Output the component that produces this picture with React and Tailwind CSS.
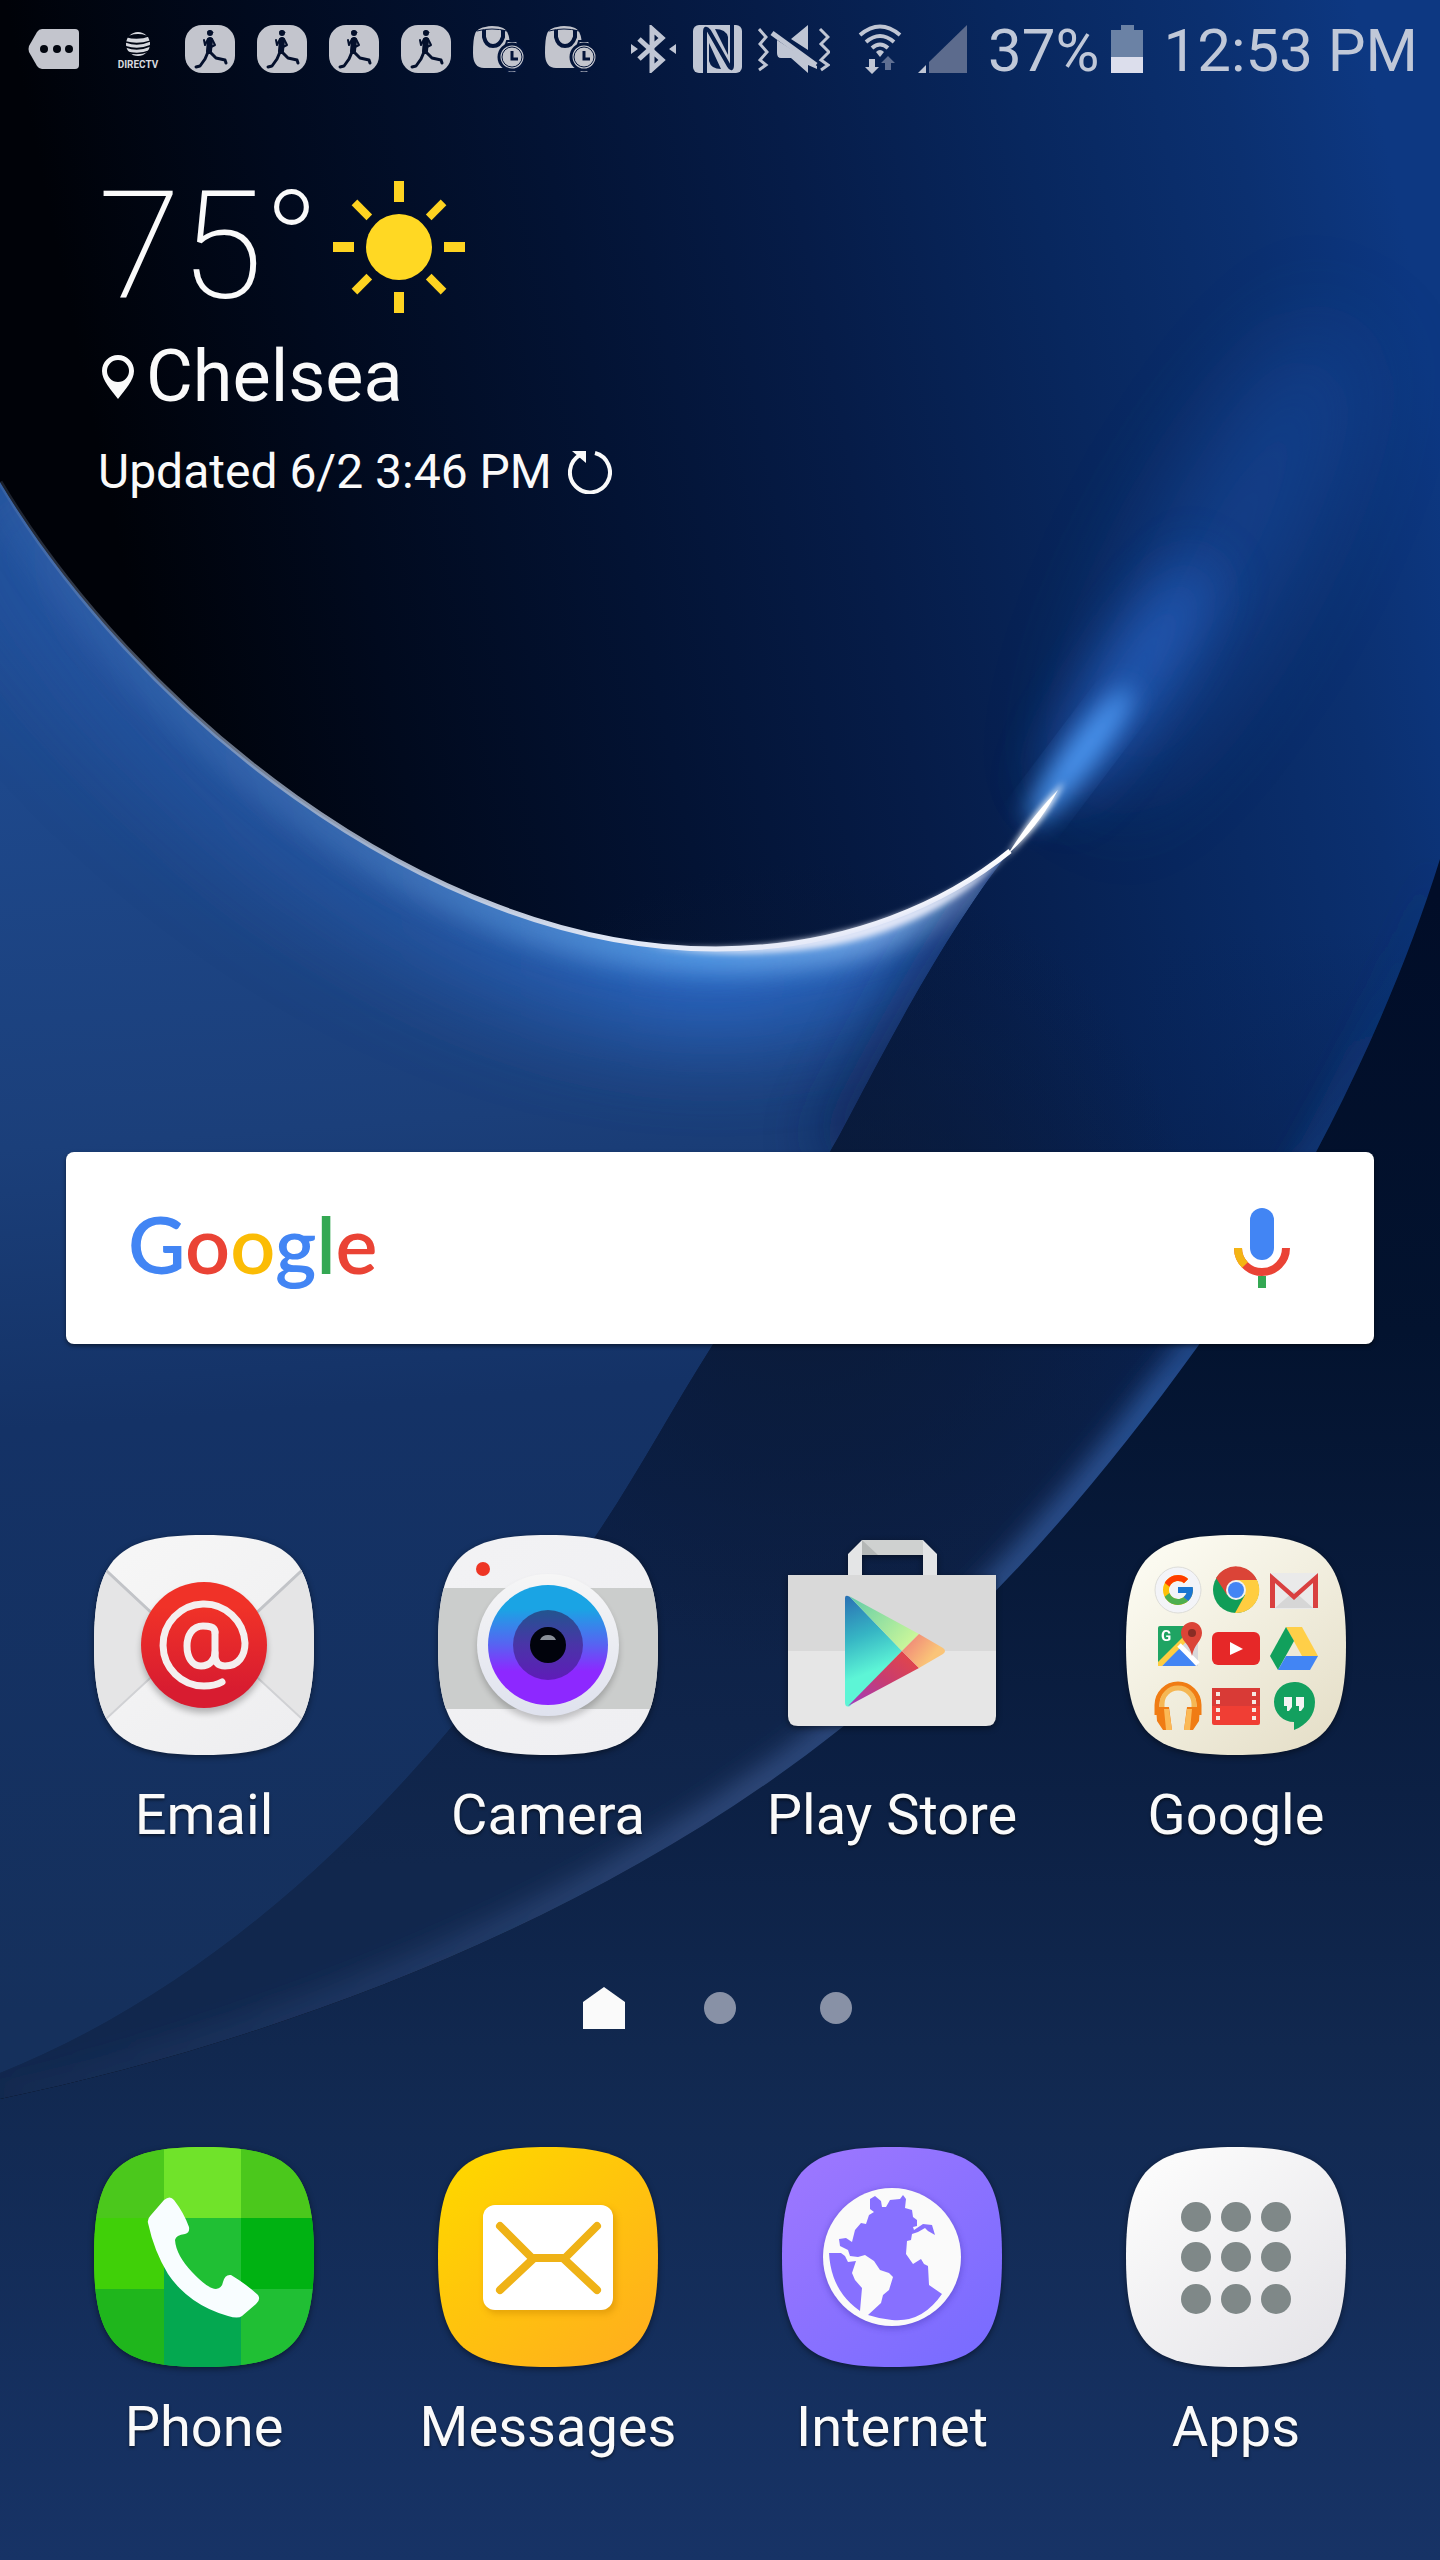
import { useId, useState } from 'react';
import { FcGoogle } from 'react-icons/fc';

const SQUIRCLE =
  'M110 0C197 0 220 23 220 110S197 220 110 220S0 197 0 110S23 0 110 0Z';

function Wallpaper() {
  const horizon = 'M0 482C130 700 420 949 716 949C850 949 950 900 1010 851';
  const inner =
    'C930 950 850 1120 831 1150C800 1210 760 1270 712 1346C670 1412 640 1470 597 1534C470 1720 280 1960 0 2073';
  return (
    <svg
      className="absolute inset-0 h-full w-full"
      viewBox="0 0 1440 2560"
      preserveAspectRatio="xMidYMid slice"
      aria-hidden="true"
    >
      <defs>
        <linearGradient id="wp-base" x1="0" y1="0" x2="0" y2="1">
          <stop offset="0.35" stopColor="#010d28" />
          <stop offset="0.52" stopColor="#03132f" />
          <stop offset="0.7" stopColor="#0c2044" />
          <stop offset="0.8" stopColor="#11284f" />
          <stop offset="1" stopColor="#173366" />
        </linearGradient>
        <linearGradient id="wp-sky" gradientUnits="userSpaceOnUse" x1="0" y1="700" x2="1440" y2="400">
          <stop offset="0.1" stopColor="#000208" />
          <stop offset="0.26" stopColor="#010a1e" />
          <stop offset="0.44" stopColor="#031334" />
          <stop offset="0.6" stopColor="#061c48" />
          <stop offset="0.76" stopColor="#08275e" />
          <stop offset="0.9" stopColor="#0b3070" />
          <stop offset="1" stopColor="#0d3882" />
        </linearGradient>
        <linearGradient id="wp-band" x1="0" y1="0" x2="0" y2="1">
          <stop offset="0.1" stopColor="#07245a" stopOpacity="0" />
          <stop offset="0.42" stopColor="#09204c" stopOpacity="0.9" />
          <stop offset="0.6" stopColor="#0d2147" />
          <stop offset="0.82" stopColor="#11274d" />
        </linearGradient>
        <radialGradient id="wp-shade" gradientUnits="userSpaceOnUse" cx="800" cy="1260" r="400">
          <stop offset="0" stopColor="#0b1a36" stopOpacity="0.9" />
          <stop offset="0.5" stopColor="#0b1a36" stopOpacity="0.5" />
          <stop offset="1" stopColor="#0b1a36" stopOpacity="0" />
        </radialGradient>
        <linearGradient id="wp-swoosh" gradientUnits="userSpaceOnUse" x1="200" y1="600" x2="300" y2="2000">
          <stop offset="0" stopColor="#1f4c93" />
          <stop offset="0.38" stopColor="#1b3f7a" />
          <stop offset="0.58" stopColor="#143266" />
          <stop offset="1" stopColor="#15305c" />
        </linearGradient>
        <linearGradient id="wp-rim" gradientUnits="userSpaceOnUse" x1="0" y1="0" x2="1010" y2="0">
          <stop offset="0" stopColor="#7d92b4" stopOpacity="0.2" />
          <stop offset="0.3" stopColor="#a9b6cc" stopOpacity="0.8" />
          <stop offset="0.6" stopColor="#dfe6f5" />
          <stop offset="1" stopColor="#ffffff" />
        </linearGradient>
        <linearGradient id="wp-glow" gradientUnits="userSpaceOnUse" x1="0" y1="0" x2="1010" y2="0">
          <stop offset="0" stopColor="#4474b8" stopOpacity="0.3" />
          <stop offset="0.35" stopColor="#5d92d2" stopOpacity="0.5" />
          <stop offset="0.7" stopColor="#64aef2" />
          <stop offset="1" stopColor="#a8c8f5" />
        </linearGradient>
        <linearGradient id="wp-halo" gradientUnits="userSpaceOnUse" x1="0" y1="0" x2="1010" y2="0">
          <stop offset="0" stopColor="#2a5fb5" stopOpacity="0.4" />
          <stop offset="0.4" stopColor="#2c64b8" stopOpacity="0.7" />
          <stop offset="0.7" stopColor="#2f74da" />
          <stop offset="1" stopColor="#2f74da" stopOpacity="0.6" />
        </linearGradient>
        <linearGradient id="wp-edge" gradientUnits="userSpaceOnUse" x1="0" y1="2099" x2="1440" y2="859">
          <stop offset="0" stopColor="#3a5a94" stopOpacity="0.05" />
          <stop offset="0.4" stopColor="#4a68a4" stopOpacity="0.5" />
          <stop offset="0.7" stopColor="#3466b4" stopOpacity="0.7" />
          <stop offset="1" stopColor="#0f3a80" stopOpacity="0" />
        </linearGradient>
        <filter id="blur-3" x="-50%" y="-50%" width="200%" height="200%"><feGaussianBlur stdDeviation="3" /></filter>
        <filter id="blur-12" x="-50%" y="-50%" width="200%" height="200%"><feGaussianBlur stdDeviation="12" /></filter>
        <filter id="blur-28" x="-100%" y="-50%" width="300%" height="200%"><feGaussianBlur stdDeviation="28" /></filter>
        <filter id="blur-50" x="-100%" y="-50%" width="300%" height="200%"><feGaussianBlur stdDeviation="45" /></filter>
        <clipPath id="clip-outer">
          <path d="M0 0H1440V859C1390 1020 1300 1200 1198 1346C1080 1510 960 1640 840 1729C600 1920 280 2040 0 2099Z" />
        </clipPath>
        <clipPath id="clip-swoosh"><path d={`${horizon}${inner}Z`} /></clipPath>
      </defs>

      <rect width="1440" height="2560" fill="url(#wp-base)" />
      <g clipPath="url(#clip-outer)">
        <rect width="1440" height="2200" fill="url(#wp-sky)" />
        <rect y="800" width="1440" height="1300" fill="url(#wp-band)" />
        <rect x="400" y="860" width="800" height="800" fill="url(#wp-shade)" />
        <path
          d="M1440 859C1390 1020 1300 1200 1198 1346C1080 1510 960 1640 840 1729C600 1920 280 2040 0 2099"
          fill="none" stroke="url(#wp-edge)" strokeWidth="36" filter="url(#blur-12)"
        />
        {/* flare beyond the horizon */}
        <ellipse cx="1220" cy="560" rx="70" ry="260" transform="rotate(28 1220 560)" fill="#1c4fa6" opacity="0.5" filter="url(#blur-50)" />
        <ellipse cx="1130" cy="680" rx="28" ry="140" transform="rotate(33 1130 680)" fill="#2a68cc" opacity="0.8" filter="url(#blur-28)" />
        <ellipse cx="1080" cy="756" rx="16" ry="84" transform="rotate(37 1080 756)" fill="#4c97f2" filter="url(#blur-12)" />
      </g>

      <g clipPath="url(#clip-swoosh)">
        <path d={`${horizon}${inner}Z`} fill="url(#wp-swoosh)" />
        <path d={horizon} fill="none" stroke="url(#wp-halo)" strokeWidth="180" opacity="0.75" filter="url(#blur-50)" />
        <path d="M0 482C130 700 420 949 716 949C850 949 900 925 980 875" fill="none" stroke="url(#wp-glow)" strokeWidth="50" opacity="0.7" filter="url(#blur-12)" />
        <path d="M1020 860C940 960 860 1130 841 1160" fill="none" stroke="#0a2352" strokeWidth="64" opacity="0.7" filter="url(#blur-28)" />
      </g>
      <path d={horizon} fill="none" stroke="url(#wp-rim)" strokeWidth="5" />
      <path d="M640 945C800 962 940 912 1012 850C970 895 900 940 800 950C740 956 690 953 640 945Z" fill="#e4e8f8" filter="url(#blur-3)" />
      <path d="M1006 857C1025 825 1045 800 1064 782C1052 808 1035 830 1006 857Z" fill="#ffffff" filter="url(#blur-3)" />
      <path d="M1008 854C1025 827 1042 806 1058 790C1046 812 1032 832 1008 854Z" fill="#ffffff" />
    </svg>
  );
}

/* ---------- status bar ---------- */

function MoreTag() {
  return (
    <svg className="mr-3 h-12 w-[52px]" viewBox="0 0 52 48">
      <path d="M14 4H47Q51 4 51 8V40Q51 44 47 44H14Q11 44 9 41L1 27Q0 24 1 21L9 7Q11 4 14 4Z" fill="#c3c5cd" />
      <circle cx="16" cy="24" r="4" fill="#02060f" />
      <circle cx="29" cy="24" r="4" fill="#02060f" />
      <circle cx="41" cy="24" r="4" fill="#02060f" />
    </svg>
  );
}

function DirecTv() {
  return (
    <svg className="h-12 w-[52px]" viewBox="0 0 52 48">
      <clipPath id="globe-clip"><circle cx="26" cy="19" r="12" /></clipPath>
      <g clipPath="url(#globe-clip)" fill="none" stroke="#d6d8de">
        <path d="M17 9Q26 6 35 9" strokeWidth="3" />
        <path d="M13 14Q26 18 39 13" strokeWidth="4" />
        <path d="M13 19Q26 24 39 18" strokeWidth="3" />
        <path d="M13 24Q26 29 39 23" strokeWidth="3" />
        <path d="M15 29Q26 32 37 28" strokeWidth="2" />
      </g>
      <text x="26" y="43" textAnchor="middle" fontSize="10" fontWeight="700" fontFamily="Roboto, sans-serif" fill="#d6d8de">DIRECTV</text>
    </svg>
  );
}

function Runner() {
  return (
    <svg className="h-12 w-[52px]" viewBox="0 0 52 48">
      <rect x="1" width="50" height="48" rx="17" fill="#c3c5cd" />
      <g fill="none" stroke="#04102c" strokeLinecap="round" strokeLinejoin="round">
        <path d="M26 15L25 26" strokeWidth="6" />
        <path d="M24 14L21 20L20 15" strokeWidth="2" />
        <path d="M28 14L31 20L27 22" strokeWidth="2" />
        <path d="M24 27L21 34L16 41L12 42" strokeWidth="3" />
        <path d="M26 27L32 33L41 35L42 38" strokeWidth="3" />
      </g>
      <circle cx="26" cy="8" r="3" fill="#04102c" />
      <path d="M23 7Q26 3 30 8Z" fill="#04102c" />
    </svg>
  );
}

function BagWatch() {
  return (
    <svg className="h-12 w-[52px]" viewBox="0 0 52 48">
      <path d="M3 9Q5 2 20 1Q34 1 36 9Q39 15 38 43H12Q1 43 1 28Q1 14 3 9Z" fill="#c3c5cd" />
      <path d="M5 6Q20 2 35 6" fill="none" stroke="#04153a" strokeWidth="1" />
      <path d="M12 5V12Q14 21 21 21Q28 21 31 12V5" fill="none" stroke="#04153a" strokeWidth="4" />
      <path d="M35 16H45L48 26H32Z M34 40H46L44 48H36Z" fill="#c3c5cd" stroke="#04153a" strokeWidth="2" />
      <circle cx="40" cy="32" r="13" fill="#c3c5cd" stroke="#04153a" strokeWidth="3" />
      <circle cx="40" cy="32" r="10" fill="none" stroke="#04153a" strokeWidth="1" />
      <path d="M40 26V34H46" fill="none" stroke="#04153a" strokeWidth="3" />
    </svg>
  );
}

function Bluetooth() {
  return (
    <svg className="h-12 w-[46px]" viewBox="0 0 46 48">
      <path d="M8 14L31 35L21 44V4L31 13L8 34" fill="none" stroke="#c0c6d4" strokeWidth="5" />
      <path d="M0 19L7 24L0 29ZM45 19L38 24L45 29Z" fill="#c0c6d4" />
    </svg>
  );
}

function NfcMark() {
  return (
    <svg className="ml-4 h-12 w-[49px]" viewBox="0 0 49 48">
      <rect width="49" height="48" rx="6" fill="#c0c6d4" />
      <path d="M12 48V7Q12 1 16 6L36 41Q39 46 39 40V0" fill="none" stroke="#061d4a" strokeWidth="4" />
      <path d="M16 18L28 44Q18 44 16 36ZM35 30L22 4Q33 4 35 12Z" fill="#061d4a" />
    </svg>
  );
}

function MuteVibrate() {
  return (
    <svg className="ml-4 h-12 w-[72px]" viewBox="0 0 72 48">
      <g fill="none" stroke="#c0c6d4" strokeWidth="3">
        <path d="M1 4L8 12L2 19L9 27L2 35L8 40L1 45" />
        <path d="M62 4L70 12L63 19L71 27L63 35L70 40L63 45" />
      </g>
      <path d="M50 0V25L33 14ZM19 15L59 41V44L50 40V48L33 33H23Q19 33 19 28Z" fill="#c0c6d4" />
      <path d="M14 8L58 40" stroke="#c0c6d4" strokeWidth="5" />
    </svg>
  );
}

function Wifi() {
  return (
    <svg className="ml-7 h-[50px] w-[44px]" viewBox="0 0 44 50">
      <g fill="none" stroke="#c0c6d4" strokeWidth="4">
        <path d="M2 11Q22 -6 42 11" />
        <path d="M8 18Q22 6 36 18" />
        <path d="M14 24Q22 17 30 24" />
      </g>
      <path d="M18 28Q22 24 26 28L22 33Z" fill="#c0c6d4" />
      <path d="M11 35H17V43H21L14 50L7 43H11Z" fill="#c0c6d4" />
      <path d="M27 46H33V39H37L30 32L23 39H27Z" fill="#5f6f92" />
    </svg>
  );
}

function Signal() {
  return (
    <svg className="ml-4 h-12 w-[50px]" viewBox="0 0 50 48">
      <path d="M0 48L8 40V48Z" fill="#c0c6d4" />
      <path d="M11 48V37L49 0V48Z" fill="#5c6b8d" />
    </svg>
  );
}

function Battery() {
  return (
    <svg className="ml-3 h-12 w-8" viewBox="0 0 32 48">
      <path d="M10 0H23V5H32V32H0V5H10Z" fill="#6b82a5" />
      <rect y="32" width="32" height="16" fill="#dcdeec" />
    </svg>
  );
}

function StatusBar() {
  return (
    <header className="flex h-[98px] items-center justify-between pr-[22px] pl-7 text-6xl leading-none text-[#c0c8d8]">
      <div className="flex items-center gap-5">
        <MoreTag />
        <DirecTv />
        <Runner />
        <Runner />
        <Runner />
        <Runner />
        <BagWatch />
        <BagWatch />
      </div>
      <div className="flex items-center whitespace-nowrap">
        <Bluetooth />
        <NfcMark />
        <MuteVibrate />
        <Wifi />
        <Signal />
        <span className="ml-5 pt-1">37%</span>
        <Battery />
        <time className="ml-5 pt-1">12:53 PM</time>
      </div>
    </header>
  );
}

/* ---------- weather ---------- */

function Sun() {
  const angles = [0, 45, 90, 135, 180, 225, 270, 315];
  return (
    <svg className="h-[134px] w-[134px]" viewBox="0 0 134 134">
      <circle cx="67" cy="67" r="33" fill="#ffd823" />
      {angles.map((a) => (
        <rect key={a} x={a % 90 ? 63 : 62} y={a % 90 ? 4 : 1} width={a % 90 ? 8 : 10} height="21" fill="#fed321" transform={`rotate(${a} 67 67)`} />
      ))}
    </svg>
  );
}

function Weather() {
  return (
    <section className="px-[98px] pt-[89px] text-[#fafafa]">
      <div className="flex items-center gap-3">
        <p className="text-[150px] leading-[120px] font-extralight">75°</p>
        <div className="-my-2">
          <Sun />
        </div>
      </div>
      <div className="mt-7 flex items-center gap-3 text-7xl leading-[84px]">
        <svg className="ml-1 h-11 w-8" viewBox="0 0 32 44">
          <path d="M16 0C7 0 0 7 0 16C0 25 9 35 16 44C23 35 32 25 32 16C32 7 25 0 16 0ZM16 5A11 11 0 1 1 16 27A11 11 0 1 1 16 5Z" fill="#fafafa" fillRule="evenodd" />
        </svg>
        <p>Chelsea</p>
      </div>
      <div className="mt-[25px] flex items-center gap-4 text-5xl leading-[56px]">
        <p>Updated 6/2 3:46 PM</p>
        <button type="button" aria-label="Refresh weather">
          <svg className="h-11 w-11" viewBox="0 0 44 44">
            <path d="M12 5A20 20 0 1 0 27 3" fill="none" stroke="#fafafa" strokeWidth="4" />
            <path d="M4 1H18V13Z" fill="#fafafa" />
          </svg>
        </button>
      </div>
    </section>
  );
}

/* ---------- search ---------- */

function SearchBar() {
  const [query, setQuery] = useState('');
  return (
    <form
      className="mx-[66px] mt-[652px] flex h-48 items-center rounded-lg bg-white pr-[84px] pl-[62px] shadow-[0_2px_4px_rgba(0,0,0,0.5)]"
      onSubmit={(e) => e.preventDefault()}
    >
      <label htmlFor="search" className="pb-2 font-[Lato,sans-serif] text-[79px] leading-[96px] font-semibold">
        <span className="text-[#4285f4]">G</span>
        <span className="text-[#ea4335]">o</span>
        <span className="text-[#fbbc05]">o</span>
        <span className="text-[#4285f4]">g</span>
        <span className="text-[#34a853]">l</span>
        <span className="text-[#ea4335]">e</span>
      </label>
      <input
        id="search"
        type="text"
        value={query}
        onChange={(e) => setQuery(e.target.value)}
        className="h-full min-w-0 flex-1 px-8 text-5xl text-gray-800 outline-none"
      />
      <button type="button" aria-label="Voice search">
        <svg className="h-20 w-14" viewBox="0 0 56 80">
          <rect x="16" width="24" height="52" rx="12" fill="#4285f4" />
          <path d="M4 40A24 24 0 0 0 52 40" fill="none" stroke="#ea4335" strokeWidth="8" />
          <path d="M4 40A24 24 0 0 0 11 57" fill="none" stroke="#f4b414" strokeWidth="8" />
          <rect x="24" y="68" width="8" height="12" fill="#34a853" />
        </svg>
      </button>
    </form>
  );
}

/* ---------- app icons ---------- */

function Tile({ from, to, children }) {
  const id = useId();
  return (
    <svg className="h-[220px] w-[220px] overflow-visible drop-shadow-[0_2px_3px_rgba(0,0,0,0.45)]" viewBox="0 0 220 220">
      <defs>
        <clipPath id={`${id}c`}><path d={SQUIRCLE} /></clipPath>
        <linearGradient id={`${id}g`} x1="0.15" y1="0.1" x2="0.85" y2="0.95">
          <stop offset="0" stopColor={from} />
          <stop offset="1" stopColor={to} />
        </linearGradient>
      </defs>
      <g clipPath={`url(#${id}c)`}>
        <rect width="220" height="220" fill={`url(#${id}g)`} />
        {children}
      </g>
    </svg>
  );
}

function EmailIcon() {
  return (
    <Tile from="#f6f6f6" to="#eeeef0">
      <defs>
        <linearGradient id="mail-red" x1="0" y1="0" x2="0" y2="1">
          <stop offset="0.2" stopColor="#f03228" />
          <stop offset="0.85" stopColor="#d81c30" />
        </linearGradient>
      </defs>
      <path d="M0 23L94 110L0 195ZM220 23L126 110L220 195Z" fill="#e5e5e6" />
      <path d="M0 24L94 112M220 24L126 112" stroke="#c2c4c8" strokeWidth="3" />
      <path d="M0 195L94 108M220 195L126 108" stroke="#d0d1d4" strokeWidth="2" />
      <circle cx="110" cy="115" r="63" fill="#000" opacity="0.25" filter="url(#blur-3)" />
      <circle cx="110" cy="110" r="63" fill="url(#mail-red)" />
      <g fill="none" stroke="#f4efef" strokeWidth="7" strokeLinecap="round">
        <path d="M121 97V120Q121 131 131 131C145 131 151 120 151 108A41 41 0 1 0 110 151Q121 151 128 147" />
        <path d="M121 97C121 91 114 91 109 91C98 91 93 101 93 111C93 122 98 131 107 131C116 131 121 124 121 118" />
      </g>
    </Tile>
  );
}

function CameraIcon() {
  return (
    <Tile from="#f2f2f4" to="#efeff2">
      <defs>
        <linearGradient id="lens" x1="0" y1="0" x2="0" y2="1">
          <stop offset="0.2" stopColor="#1aa4e4" />
          <stop offset="0.5" stopColor="#5862f2" />
          <stop offset="0.72" stopColor="#8d28ff" />
        </linearGradient>
        <linearGradient id="lens-in" x1="0" y1="0" x2="0" y2="1">
          <stop offset="0" stopColor="#22558f" />
          <stop offset="0.5" stopColor="#4a34a8" />
          <stop offset="1" stopColor="#5f1cb8" />
        </linearGradient>
        <linearGradient id="lens-ring" x1="0" y1="0" x2="0" y2="1">
          <stop offset="0" stopColor="#f6f6f6" />
          <stop offset="1" stopColor="#dfe2ee" />
        </linearGradient>
      </defs>
      <rect y="53" width="220" height="121" fill="#cbcdcc" />
      <circle cx="45" cy="34" r="7" fill="#ee3524" />
      <circle cx="110" cy="115" r="71" fill="#000" opacity="0.2" filter="url(#blur-3)" />
      <circle cx="110" cy="110" r="71" fill="url(#lens-ring)" />
      <circle cx="110" cy="110" r="60" fill="url(#lens)" />
      <circle cx="110" cy="110" r="35" fill="url(#lens-in)" />
      <circle cx="110" cy="110" r="18" fill="#01030c" />
      <path d="M102 105Q104 100 110 100Q116 100 118 105Z" fill="#8a8f98" />
    </Tile>
  );
}

function PlayStoreIcon() {
  return (
    <svg className="h-[220px] w-[220px] drop-shadow-[0_2px_3px_rgba(0,0,0,0.45)]" viewBox="0 0 220 220">
      <defs>
        <linearGradient id="play-a" x1="0" y1="0" x2="0.2" y2="1">
          <stop offset="0" stopColor="#2a70b4" />
          <stop offset="0.4" stopColor="#36b5c4" />
          <stop offset="0.75" stopColor="#5df5d6" />
        </linearGradient>
        <linearGradient id="play-b" x1="0" y1="0" x2="1" y2="0.7">
          <stop offset="0" stopColor="#5fcba8" />
          <stop offset="1" stopColor="#cbf79a" />
        </linearGradient>
        <linearGradient id="play-c" x1="0" y1="1" x2="1" y2="0">
          <stop offset="0" stopColor="#a03cc0" />
          <stop offset="0.5" stopColor="#c83c70" />
          <stop offset="1" stopColor="#e84840" />
        </linearGradient>
        <linearGradient id="play-d" x1="0" y1="0" x2="0.8" y2="0.5">
          <stop offset="0.2" stopColor="#f08878" />
          <stop offset="1" stopColor="#fac478" />
        </linearGradient>
      </defs>
      <path d="M80 5H141V20H80Z" fill="#cfd1d0" />
      <path d="M80 5L96 20H80Z" fill="#b4b7b6" />
      <path d="M66 19L80 5V42H66ZM155 19L141 5V42H155Z" fill="#e4e5e6" />
      <path d="M6 40H214V116H6Z" fill="#d9d9d9" />
      <path d="M6 116H214V181Q214 191 204 191H16Q6 191 6 181Z" fill="#e6e6e6" />
      <path d="M63 63Q63 59 68 62L120 116L68 171Q63 173 63 167Z" fill="url(#play-a)" />
      <path d="M67 61L137 99L120 116Z" fill="url(#play-b)" />
      <path d="M120 116L137 133L66 171Z" fill="url(#play-c)" />
      <path d="M137 99L161 113Q165 116 161 119L137 133L120 116Z" fill="url(#play-d)" />
    </svg>
  );
}

function GoogleFolderIcon() {
  return (
    <Tile from="#fbfaf0" to="#e6e0ca">
      <circle cx="52" cy="55" r="23" fill="#f3f4f8" stroke="#dcdcd8" />
      <FcGoogle x="34" y="37" size={36} />

      {/* Chrome */}
      <circle cx="110" cy="55" r="23" fill="#109d58" />
      <path d="M90 43A23 23 0 0 1 131 45H110L101 60Z" fill="#db4437" />
      <path d="M110 45H131A23 23 0 0 1 109 78L119 60Z" fill="#ffcd40" />
      <circle cx="110" cy="55" r="10" fill="#f1f1f1" />
      <circle cx="110" cy="55" r="8" fill="#4285f4" />

      {/* Gmail */}
      <rect x="144" y="38" width="48" height="36" rx="2" fill="#eaeaea" />
      <path d="M149 73L168 56L187 73Z" fill="#d6d6d6" />
      <path d="M144 38L168 59L192 38V73H187V48L168 65L149 48V73H144Z" fill="#d94040" />

      {/* Maps */}
      <rect x="32" y="91" width="40" height="40" rx="2" fill="#1fa463" />
      <path d="M53 111L72 91V131H34Z" fill="#d8d8da" />
      <path d="M53 112L70 131H36Z" fill="#4285f4" />
      <path d="M32 127L60 99L63 104L36 131H32Z" fill="#ffcd40" />
      <path d="M53 110L72 129" stroke="#fff" strokeWidth="5" />
      <text x="35" y="106" fontSize="15" fontWeight="700" fontFamily="Roboto, sans-serif" fill="#fff">G</text>
      <path d="M66 87C60 87 55 92 55 98C55 106 64 109 66 121C68 109 76 106 76 98C76 92 72 87 66 87Z" fill="#db4437" />
      <circle cx="66" cy="98" r="4" fill="#8a2c24" />

      {/* YouTube */}
      <rect x="86" y="97" width="48" height="33" rx="6" fill="#e62828" />
      <path d="M104 107L117 114L104 120Z" fill="#fff" />

      {/* Drive */}
      <path d="M160 92H176L192 121H176Z" fill="#ffcf48" />
      <path d="M160 92L168 106L152 135L144 121Z" fill="#11a05c" />
      <path d="M160 121H192L184 135H152Z" fill="#4285f4" />

      {/* Play Music */}
      <path d="M31 180V170A21 21 0 0 1 73 170V180" fill="none" stroke="#f07c14" strokeWidth="5" />
      <path d="M36 173V169A16 16 0 0 1 68 169V173" fill="none" stroke="#f5b754" strokeWidth="5" />
      <path d="M30 172H43L46 195H37L31 186ZM74 172H61L58 195H67L73 186Z" fill="#f07c14" />
      <path d="M38 174H43L46 195H40ZM66 174H61L58 195H64Z" fill="#fbb956" />

      {/* Play Movies */}
      <rect x="86" y="153" width="48" height="37" rx="2" fill="#f03e34" />
      <path d="M86 153H134V171H86Z" fill="#d93a36" />
      {[157, 165, 173, 181].map((y) => (
        <g key={y} fill="#f6e8e2">
          <rect x="90" y={y} width="4" height="4" />
          <rect x="126" y={y} width="4" height="4" />
        </g>
      ))}

      {/* Hangouts */}
      <path d="M168 147A20 20 0 0 1 189 167C189 180 181 190 168 195V187A20 20 0 1 1 168 147Z" fill="#13a05f" />
      <path d="M158 162H166V172L163 176H161V171H158ZM170 162H178V172L175 176H173V171H170Z" fill="#f4f4f4" />
    </Tile>
  );
}

function PhoneIcon() {
  return (
    <Tile from="#4cd810" to="#28c434">
      <path d="M0 0H70V71H0ZM147 0H220V71H147Z" fill="#4bc81c" />
      <path d="M70 0H147V71H70Z" fill="#70e32a" />
      <path d="M0 71H70V142H0Z" fill="#40d008" />
      <path d="M70 71H147V142H70Z" fill="#20bf34" />
      <path d="M147 71H220V142H147Z" fill="#00b212" />
      <path d="M0 142H70V220H0Z" fill="#1fb61c" />
      <path d="M70 120L98 142H147V220H70Z" fill="#04a850" />
      <path d="M147 142H220V220H147Z" fill="#20bf34" />
      <path
        d="M70 53Q76 48 80 53Q90 66 95 80Q96 86 91 87Q82 88 81 93Q82 108 98 125Q114 142 122 142Q128 141 129 135Q131 127 137 128Q152 137 164 148Q167 153 162 157L148 169Q144 172 134 169Q95 158 74 127Q60 104 54 76Q53 72 57 68Z"
        fill="#f8fdff"
      />
    </Tile>
  );
}

function MessagesIcon() {
  return (
    <Tile from="#ffd400" to="#ffb01c">
      <rect x="47" y="61" width="131" height="106" rx="12" fill="#c98500" opacity="0.45" filter="url(#blur-3)" />
      <rect x="45" y="58" width="130" height="105" rx="12" fill="#fff" />
      <path
        d="M62 79L95 112L62 143M159 79L126 112L159 143M95 111H126"
        fill="none" stroke="#efb216" strokeWidth="8" strokeLinecap="round" strokeLinejoin="round"
      />
    </Tile>
  );
}

function InternetIcon() {
  return (
    <Tile from="#9a76ff" to="#7a6cff">
      <circle cx="110" cy="112" r="70" fill="#3a2ca0" opacity="0.35" filter="url(#blur-3)" />
      <circle cx="110" cy="110" r="69" fill="#fafafa" />
      <g fill="#8770ff">
        <path d="M88 52L93 49L99 54L100 60L104 60L108 53L118 52L121 48L124 52L123 61L130 63L131 70L135 73V79L131 80L132 83L141 77L150 78L153 88L146 84L143 81L136 85L130 87L129 93L125 94L124 107L131 117L139 112L142 117L146 119L147 138L160 147Q140 176 110 173Q98 172 86 168L99 156L101 148L107 143L111 130L107 126L98 123L92 114L83 108L76 110L68 109L66 103L58 99L57 92L64 91L70 95L73 83L79 76L84 77L87 68L92 65L88 62Z" />
        <path d="M47 106H59L63 109L66 115L74 114L70 126L73 133L80 141L78 164Q49 144 47 106Z" />
      </g>
    </Tile>
  );
}

function AppsIcon() {
  return (
    <Tile from="#fbfbfb" to="#e6e5e9">
      {[70, 110, 152].map((y) =>
        [70, 110, 150].map((x) => <circle key={`${x}-${y}`} cx={x} cy={y} r="15" fill="#7f8888" />)
      )}
    </Tile>
  );
}

const homeApps = [
  { name: 'Email', Icon: EmailIcon },
  { name: 'Camera', Icon: CameraIcon },
  { name: 'Play Store', Icon: PlayStoreIcon },
  { name: 'Google', Icon: GoogleFolderIcon },
];

const dockApps = [
  { name: 'Phone', Icon: PhoneIcon },
  { name: 'Messages', Icon: MessagesIcon },
  { name: 'Internet', Icon: InternetIcon },
  { name: 'Apps', Icon: AppsIcon },
];

function AppRow({ apps, className }) {
  return (
    <div className={`grid grid-cols-4 px-8 ${className}`}>
      {apps.map(({ name, Icon }) => (
        <button key={name} type="button" className="flex flex-col items-center gap-7">
          <Icon />
          <span className="text-[56px] leading-[64px] whitespace-nowrap text-[#fafafa] [text-shadow:0_2px_3px_rgba(0,0,0,0.5)]">
            {name}
          </span>
        </button>
      ))}
    </div>
  );
}

function Pager() {
  const [page, setPage] = useState(0);
  return (
    <nav className="mt-[140px] flex justify-center" aria-label="Home screens">
      {[0, 1, 2].map((i) => (
        <button
          key={i}
          type="button"
          aria-label={`Page ${i + 1}`}
          onClick={() => setPage(i)}
          className={`flex h-[42px] w-[116px] items-center justify-center ${i === page ? 'text-[#fafafa]' : 'text-[#8891a6]'}`}
        >
          {i === 0 ? (
            <svg className="h-[42px] w-[42px]" viewBox="0 0 42 42">
              <path d="M21 0L42 15V42H0V15Z" fill="currentColor" />
            </svg>
          ) : (
            <span className="h-8 w-8 rounded-full bg-current" />
          )}
        </button>
      ))}
    </nav>
  );
}

export default function App() {
  return (
    <div className="relative min-h-screen overflow-hidden bg-[#03132f] font-[Roboto,sans-serif]">
      <Wallpaper />
      <div className="relative pb-[101px]">
        <StatusBar />
        <main>
          <Weather />
          <SearchBar />
          <AppRow apps={homeApps} className="mt-[191px]" />
          <Pager />
          <AppRow apps={dockApps} className="mt-[118px]" />
        </main>
      </div>
    </div>
  );
}
